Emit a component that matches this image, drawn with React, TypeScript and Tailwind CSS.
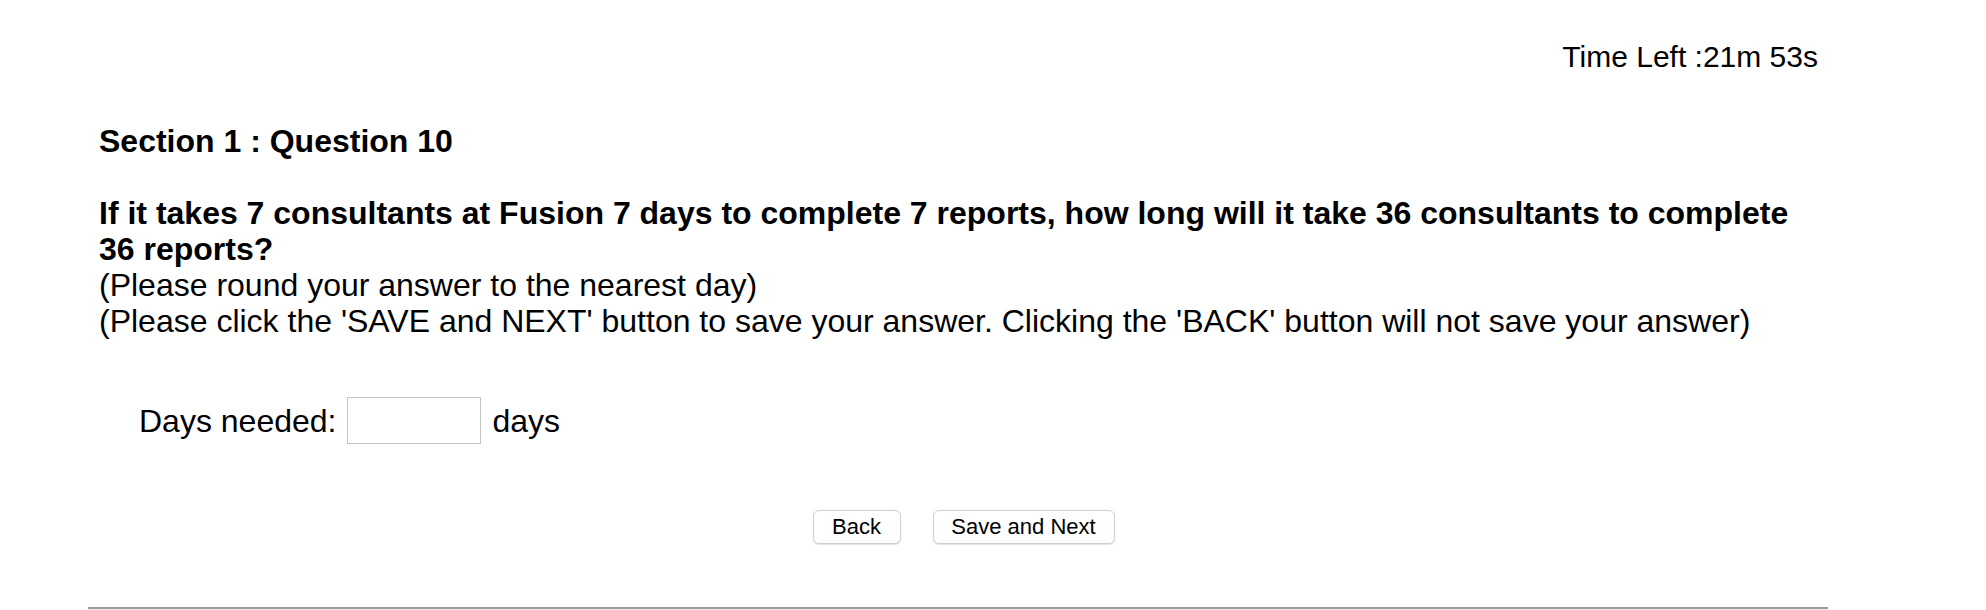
import React, { useState } from "react";

const App: React.FC = () => {
  const [days, setDays] = useState("");

  return (
    <div className="min-h-[610px] bg-white text-black font-['Liberation_Sans',Arial,sans-serif]">
      <div className="ml-[88px] w-[1740px]">
        <div className="pt-[40px] pr-[10px] text-right text-[30px] leading-[34px]">
          Time Left :21m 53s
        </div>

        <div className="pl-[11px] pr-2 pt-[49px]">
          <h2 className="text-[32px] leading-[36px] font-bold">
            Section 1 : Question 10
          </h2>

          <div className="mt-[36px] text-[32px] leading-[36px]">
            <p className="font-bold">
              If it takes 7 consultants at Fusion 7 days to complete 7 reports, how long will it take 36 consultants to complete 36 reports?
            </p>
            <p>(Please round your answer to the nearest day)</p>
            <p>
              (Please click the 'SAVE and NEXT' button to save your answer. Clicking the 'BACK' button will not save your answer)
            </p>
          </div>

          <div className="mt-[58px] ml-[40px] flex items-center text-[32px] leading-[36px]">
            <label htmlFor="days">Days needed:</label>
            <input
              id="days"
              type="text"
              value={days}
              onChange={(e) => setDays(e.target.value)}
              className="ml-[11px] h-[47px] w-[134px] border border-[#c4c4c4] bg-white px-2 text-[26px] outline-none"
              aria-label="Days needed"
            />
            <span className="ml-[11px]">days</span>
          </div>

          <div className="mt-[66px] flex justify-center gap-[32px] pl-[8px]">
            <button className="h-[34px] w-[88px] rounded-[6px] border border-[#cfcfcf] bg-white text-[22px] leading-none shadow-[0_1px_1px_rgba(0,0,0,0.12)]">
              Back
            </button>
            <button className="h-[34px] w-[182px] rounded-[6px] border border-[#cfcfcf] bg-white text-[22px] leading-none shadow-[0_1px_1px_rgba(0,0,0,0.12)]">
              Save and Next
            </button>
          </div>
        </div>

        <hr className="mt-[63px] border-t-2 border-b border-t-[#9a9a9a] border-b-[#ececec]" />
      </div>
    </div>
  );
};

export default App;
